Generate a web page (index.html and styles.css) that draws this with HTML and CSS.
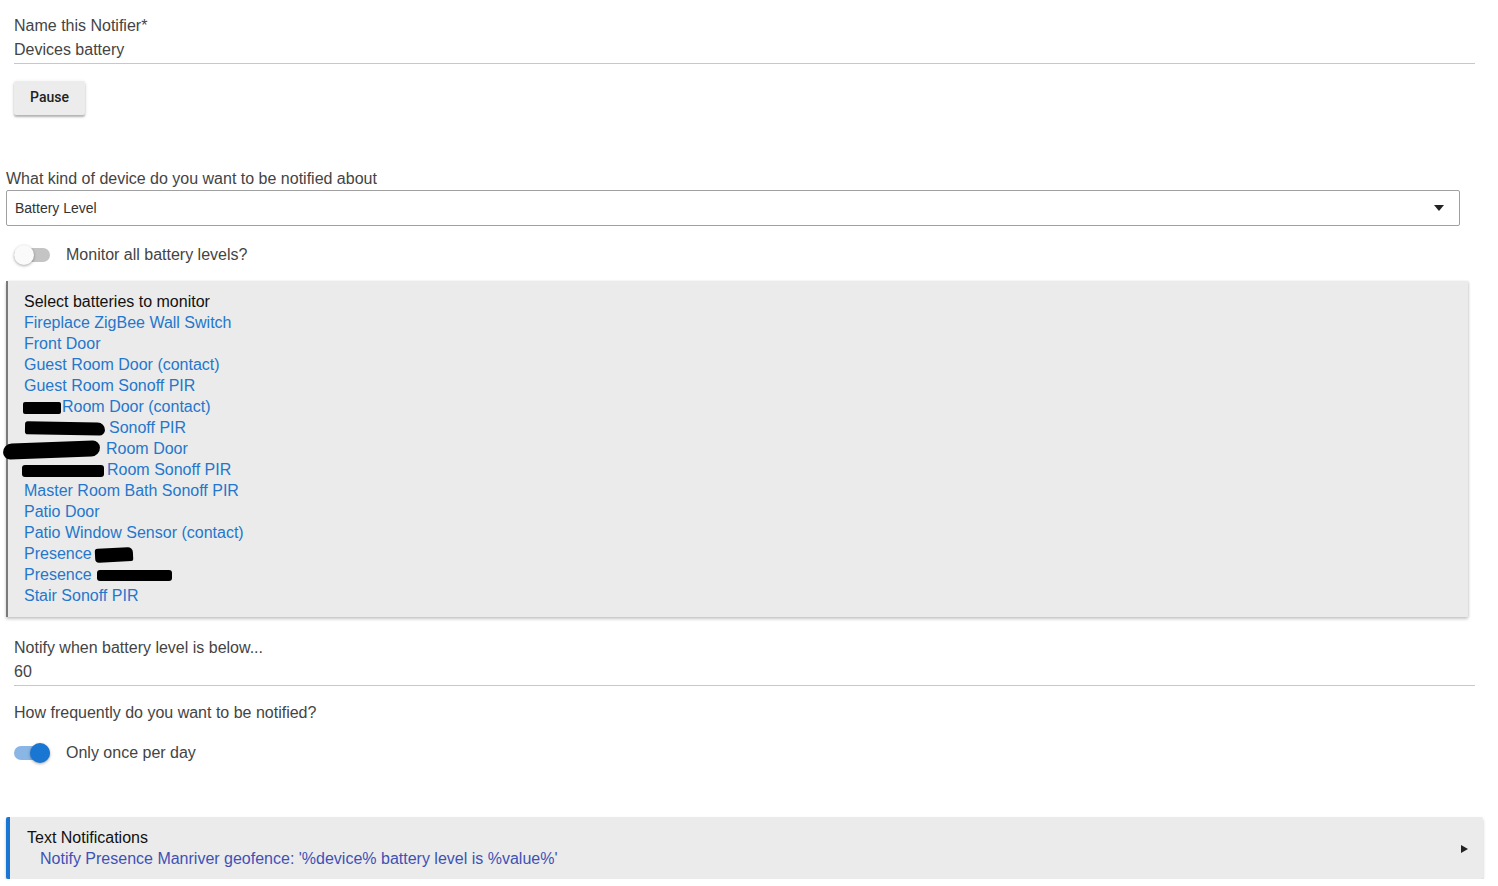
FILE: index.html
```html
<!DOCTYPE html>
<html>
<head>
<meta charset="utf-8">
<link rel="stylesheet" href="styles.css">
</head>
<body>
<div class="page">
  <div class="field first">
    <div class="field-label">Name this Notifier*</div>
    <div class="field-value">Devices battery</div>
  </div>
  <button class="btn">Pause</button>

  <div class="select-label">What kind of device do you want to be notified about</div>
  <div class="select">
    <span>Battery Level</span>
    <span class="caret"></span>
  </div>

  <div class="toggle-row first-toggle">
    <span class="toggle"><span class="knob"></span></span>
    <span class="toggle-label">Monitor all battery levels?</span>
  </div>

  <div class="panel">
    <div class="panel-title">Select batteries to monitor</div>
    <div class="link">Fireplace ZigBee Wall Switch</div>
    <div class="link">Front Door</div>
    <div class="link">Guest Room Door (contact)</div>
    <div class="link">Guest Room Sonoff PIR</div>
    <div class="link"><span class="redact r1"></span>Room Door (contact)</div>
    <div class="link"><span class="redact r2"></span>Sonoff PIR</div>
    <div class="link"><span class="redact r3"></span>Room Door</div>
    <div class="link"><span class="redact r4"></span>Room Sonoff PIR</div>
    <div class="link">Master Room Bath Sonoff PIR</div>
    <div class="link">Patio Door</div>
    <div class="link">Patio Window Sensor (contact)</div>
    <div class="link">Presence <span class="redact r5"></span></div>
    <div class="link">Presence <span class="redact r6"></span></div>
    <div class="link">Stair Sonoff PIR</div>
  </div>

  <div class="field second">
    <div class="field-label">Notify when battery level is below...</div>
    <div class="field-value">60</div>
  </div>

  <div class="question">How frequently do you want to be notified?</div>

  <div class="toggle-row second-toggle">
    <span class="toggle on"><span class="knob"></span></span>
    <span class="toggle-label">Only once per day</span>
  </div>

  <div class="notif">
    <div class="notif-text">
      <div class="notif-title">Text Notifications</div>
      <div class="notif-link">Notify Presence Manriver geofence: '%device% battery level is %value%'</div>
    </div>
    <span class="arrow"></span>
  </div>
</div>
</body>
</html>
```

FILE: styles.css
```css
html, body {
  margin: 0;
  padding: 0;
  background: #fff;
}
body {
  font-family: "Liberation Sans", Arial, sans-serif;
  font-size: 16px;
  color: #444;
}
.page {
  padding: 0 0 0 6px;
  width: 1478px;
  display: flex;
  flex-direction: column;
  align-items: flex-start;
}
.field {
  margin-left: 8px;
  width: 1461px;
  border-bottom: 1px solid #c8c8c8;
  padding-bottom: 3px;
}
.field.first { margin-top: 16px; }
.field.second { margin-top: 21px; }
.field-label, .field-value {
  line-height: 20px;
  height: 20px;
}
.field-value { margin-top: 4px; }
.btn {
  margin: 17px 0 0 8px;
  width: 71px;
  height: 34px;
  border: none;
  border-radius: 2px;
  background: #ececec;
  box-shadow: 0 2px 2px rgba(0,0,0,0.25), 0 1px 4px rgba(0,0,0,0.1);
  font-family: Roboto, "Liberation Sans", Arial, sans-serif;
  font-weight: 500;
  font-size: 14px;
  color: #222;
  padding: 0 0 2px 0;
}
.select-label {
  margin-top: 54px;
  line-height: 20px;
}
.select {
  margin-top: 1px;
  height: 34px;
  border: 1px solid #a0a0a0;
  border-radius: 2px;
  display: flex;
  align-items: center;
  justify-content: space-between;
  padding: 0 15px 0 8px;
  font-size: 14px;
  color: #333;
  width: 1429px;
}
.caret {
  width: 0;
  height: 0;
  border-left: 5px solid transparent;
  border-right: 5px solid transparent;
  border-top: 6px solid #222;
}
.toggle-row {
  margin-left: 8px;
  display: flex;
  align-items: center;
  height: 20px;
}
.first-toggle { margin-top: 19px; }
.second-toggle { margin-top: 20px; }
.toggle {
  position: relative;
  width: 36px;
  height: 14px;
  border-radius: 7px;
  background: #c4c4c4;
  display: inline-block;
}
.knob {
  position: absolute;
  top: -3px;
  left: 0;
  width: 20px;
  height: 20px;
  border-radius: 50%;
  background: #fafafa;
  box-shadow: 0 1px 3px rgba(0,0,0,0.35);
}
.toggle.on { background: #8ab6e6; }
.toggle.on .knob {
  left: 16px;
  background: #1976d2;
}
.toggle-label {
  margin-left: 16px;
  color: #444;
}
.panel {
  margin-top: 16px;
  width: 1430px;
  padding: 10px 14px 11px 16px;
  background: #ebebeb;
  border-left: 2px solid #7a7a7a;
  box-shadow: 0 2px 3px rgba(0,0,0,0.22), 1px 0 2px rgba(0,0,0,0.08);
}
.panel-title {
  color: #111;
  line-height: 21px;
}
.link {
  color: #2477cc;
  line-height: 21px;
  height: 21px;
  white-space: nowrap;
}
.redact {
  display: inline-block;
  background: #000;
  vertical-align: middle;
  border-radius: 4px;
}
.r1 { width: 38px; height: 12px; margin-left: -1px; margin-right: 1px; border-radius: 2px; }
.r2 { width: 80px; height: 13px; margin-left: 1px; margin-right: 4px; border-radius: 3px 8px 6px 3px; transform: rotate(1deg); }
.r3 { width: 97px; height: 16px; margin-left: -21px; margin-right: 6px; border-radius: 10px 8px 10px 8px; transform: rotate(-2deg); }
.r4 { width: 82px; height: 12px; margin-left: -2px; margin-right: 3px; border-radius: 3px; }
.r5 { width: 38px; height: 14px; margin-left: -1px; border-radius: 3px 5px 2px 4px; transform: rotate(-3deg); }
.r6 { width: 75px; height: 11px; margin-left: 1px; border-radius: 3px; }
.question {
  margin-left: 8px;
  margin-top: 17px;
  line-height: 20px;
}
.notif {
  margin-top: 54px;
  width: 1477px;
  height: 62px;
  box-sizing: border-box;
  background: #ebebeb;
  border-left: 4px solid #1976d2;
  border-radius: 2px;
  box-shadow: 0 2px 3px rgba(0,0,0,0.25);
  display: flex;
  align-items: center;
  justify-content: space-between;
  padding: 0 15px 0 17px;
}
.notif-title {
  color: #111;
  line-height: 20px;
}
.notif-link {
  color: #3f51b5;
  line-height: 21px;
  margin-left: 13px;
}
.arrow {
  width: 0;
  height: 0;
  border-top: 4px solid transparent;
  border-bottom: 4px solid transparent;
  border-left: 7px solid #222;
  margin-top: 2px;
}
```
